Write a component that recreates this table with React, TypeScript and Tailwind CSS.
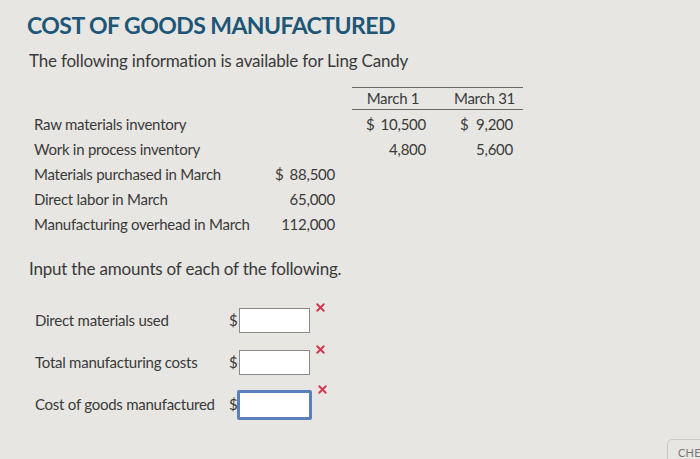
import React from 'react';
import { X } from 'lucide-react';

const rows = [
  { label: 'Raw materials inventory', total: '', m1: ['$', '10,500'], m31: ['$', '9,200'] },
  { label: 'Work in process inventory', total: '', m1: ['', '4,800'], m31: ['', '5,600'] },
  { label: 'Materials purchased in March', total: ['$', '88,500'], m1: null, m31: null },
  { label: 'Direct labor in March', total: ['', '65,000'], m1: null, m31: null },
  { label: 'Manufacturing overhead in March', total: ['', '112,000'], m1: null, m31: null },
];

const inputs = [
  { label: 'Direct materials used', active: false },
  { label: 'Total manufacturing costs', active: false },
  { label: 'Cost of goods manufactured', active: true },
];

const Amount: React.FC<{ v: any; className: string }> = ({ v, className }) => {
  if (!v) return <div />;
  return (
    <div className={'flex justify-between ' + className}>
      <span>{v[0]}</span>
      <span>{v[1]}</span>
    </div>
  );
};

const App: React.FC = () => {
  return (
    <div className="relative w-[700px] h-[459px] overflow-hidden bg-[#e7e6e2] text-[#3a3a3a] font-['Lato',sans-serif]">
      <div className="pl-[27px] pt-[10px]">
        <h1 className="text-[23px] leading-[30px] font-bold text-[#1d5677] tracking-[-0.55px]">
          COST OF GOODS MANUFACTURED
        </h1>
        <p className="text-[17px] leading-[24px] mt-[9px] pl-[2px] tracking-[-0.2px]">
          The following information is available for Ling Candy
        </p>

        <div className="mt-[14px] w-[496px] text-[15px] tracking-[-0.25px]">
          <div className="flex">
            <div className="w-[325px]" />
            <div className="flex-1 border-t border-b border-[#6a6a6a] flex h-[23px] items-center">
              <div className="w-[80px] text-center pl-[2px]">March 1</div>
              <div className="flex-1 text-center pl-[14px]">March 31</div>
            </div>
          </div>
          {rows.map((r) => (
            <div key={r.label} className="grid grid-cols-[240px_76px_93px_87px] h-[25px] items-center pt-[3px]">
              <div className="pl-[7px] whitespace-nowrap">{r.label}</div>
              <Amount v={r.total} className="pl-[8px] pr-[8px]" />
              <Amount v={r.m1} className="pl-[23px] pr-[10px]" />
              <Amount v={r.m31} className="pl-[24px] pr-[10px]" />
            </div>
          ))}
        </div>

        <p className="text-[17px] leading-[24px] mt-[22px] pl-[2px] tracking-[-0.2px]">
          Input the amounts of each of the following.
        </p>

        <div className="mt-[26px] flex flex-col gap-[15px] text-[15px] tracking-[-0.25px]">
          {inputs.map((it) => (
            <div key={it.label} className="flex items-center h-[27px]">
              <div className="w-[202px] pl-[8px] whitespace-nowrap">{it.label}</div>
              <div className="w-[10px]">$</div>
              <div className="relative">
                {it.active ? (
                  <div className="w-[75px] h-[30px] border-[3px] border-[#5b7fb8] rounded-[2px] bg-white -ml-[2px]" />
                ) : (
                  <div className="w-[71px] h-[25px] border border-[#8a8a8a] bg-white" />
                )}
                <X className="absolute -right-[17px] -top-[7px] text-[#d8354f]" size={13} strokeWidth={3.5} />
              </div>
            </div>
          ))}
        </div>
      </div>
      <div className="absolute left-[667px] top-[439px] w-[60px] h-[30px] border border-[#c9c9c6] rounded-[5px] pl-[10px] pt-[5px] text-[11px] text-[#777] tracking-wide">
        CHE
      </div>
    </div>
  );
};

export default App;
